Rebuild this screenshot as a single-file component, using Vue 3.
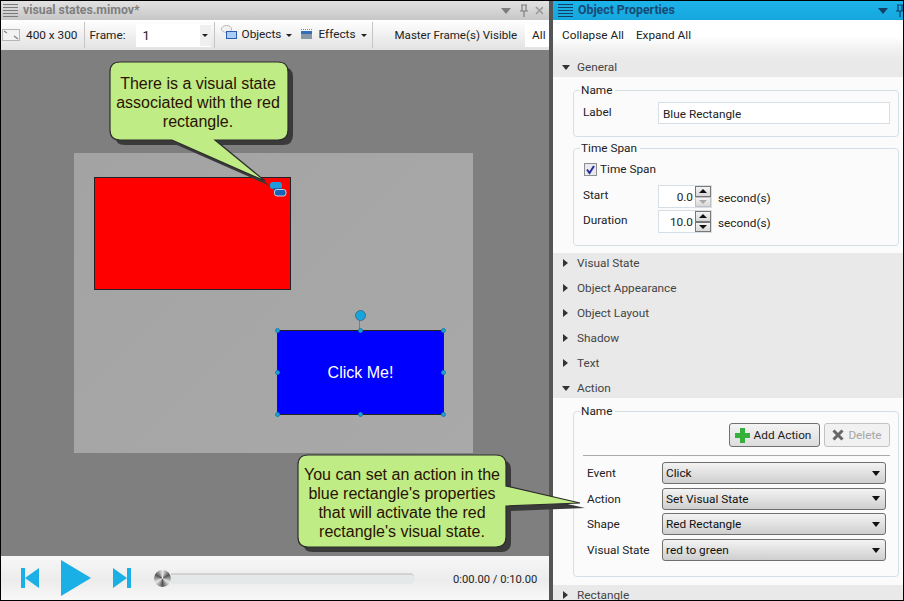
<template>
  <div class="app">
    <section class="doc">
      <header class="title">
        <div class="grip"><i v-for="n in 5" :key="n"></i></div>
        <span class="title-text">visual states.mimov*</span>
        <div class="win-icons">
          <svg width="42" height="14" viewBox="0 0 42 14">
            <path d="M0 4h10l-5 6z" fill="#7d7d7d" />
            <path d="M20 1h6M21 1v6h4V1M19 7h8M23 7v6" fill="none" stroke="#7d7d7d" stroke-width="1.2" />
            <path d="M35 3l7 7M42 3l-7 7" fill="none" stroke="#9a9a9a" stroke-width="1.6" />
          </svg>
        </div>
      </header>
      <div class="toolbar">
        <svg class="size-icon" width="18" height="12" viewBox="0 0 18 12">
          <rect x="0.5" y="0.5" width="17" height="11" fill="#f2f2f2" stroke="#b5b5b5" />
          <path d="M2 2l3 2M16 10l-4-3" stroke="#888" stroke-width="1.5" />
        </svg>
        <span class="size-text">400 x 300</span>
        <i class="sep sep-a"></i>
        <span>Frame:</span>
        <div class="frame-box"><span>1</span><b class="frame-drop"></b></div>
        <i class="sep sep-b"></i>
        <svg class="obj-icon" width="17" height="18" viewBox="0 0 17 18">
          <ellipse cx="5.5" cy="5" rx="5" ry="3.5" fill="#f2f2f2" stroke="#b8b8b8" />
          <rect x="5.5" y="7.5" width="10" height="7" fill="#a9cdf5" stroke="#2a5db0" />
        </svg>
        <span class="menu-text">Objects</span>
        <b class="drop"></b>
        <svg class="fx-icon" width="13" height="12" viewBox="0 0 13 12">
          <path d="M1 1.5h11" stroke="#3d9ae0" stroke-dasharray="1 1" />
          <rect x="1" y="3" width="11" height="8" fill="#8a97a5" />
          <rect x="1" y="3" width="11" height="3" fill="#2e6fb5" />
        </svg>
        <span class="menu-text fx-text">Effects</span>
        <b class="drop"></b>
        <i class="sep sep-c"></i>
        <span class="master">Master Frame(s) Visible</span>
        <div class="all-box">All</div>
      </div>
      <div class="canvas">
        <div class="stage">
          <div class="shape red"></div>
          <svg class="state-icon" width="18" height="16" viewBox="0 0 18 16">
            <rect x="1" y="1" width="12" height="7" rx="3" fill="#1f9bdc" />
            <rect x="4" y="7" width="8" height="4" fill="#1763b5" />
            <rect x="5.500" y="8.500" width="11.500" height="6.500" rx="2.500" fill="#1763b5" stroke="#c4d3e6" />
          </svg>
          <div class="shape blue">Click Me!</div>
          <div class="stem"></div>
          <div class="knob"></div>
          <i v-for="h in handles" :key="h.id" class="handle" :style="{ left: h.x + 'px', top: h.y + 'px' }"></i>
        </div>
      </div>
      <div class="player">
        <svg class="player-btn skip-back" width="18" height="20" viewBox="0 0 18 20">
          <path d="M0 0h4v20H0zM18 0v20L4 10z" fill="#1ab0e6" />
        </svg>
        <svg class="player-btn play" width="30" height="36" viewBox="0 0 30 36">
          <path d="M0 0l30 18L0 36z" fill="#1ab0e6" />
        </svg>
        <svg class="player-btn skip-fwd" width="18" height="20" viewBox="0 0 18 20">
          <path d="M14 0h4v20h-4zM0 0v20l14-10z" fill="#1ab0e6" />
        </svg>
        <div class="scrub"><div class="scrub-knob"></div><div class="scrub-track"></div></div>
        <span class="time">0:00.00 / 0:10.00</span>
      </div>
    </section>

    <section class="props">
      <header class="title title-blue">
        <div class="grip grip-dark"><i v-for="n in 5" :key="n"></i></div>
        <span class="title-text title-text-blue">Object Properties</span>
        <svg class="blue-icons" width="26" height="14" viewBox="0 0 26 14">
          <path d="M0 4h10l-5 6z" fill="#123f66" />
          <path d="M19 1h6M20 1v6h4V1M18 7h8M22 7v6" fill="none" stroke="#123f66" stroke-width="1.2" />
        </svg>
      </header>
      <div class="props-tools">
        <span>Collapse All</span>
        <span>Expand All</span>
      </div>
      <div class="sec-head sec-general"><b class="tri-down"></b>General</div>
      <div class="sec-body body-general">
        <fieldset class="group group-name">
          <legend>Name</legend>
          <div class="label-row">
            <span class="label-cell">Label</span>
            <div class="text-input">Blue Rectangle</div>
          </div>
        </fieldset>
        <fieldset class="group group-time">
          <legend>Time Span</legend>
          <div class="check-row">
            <svg width="13" height="13" viewBox="0 0 13 13">
              <rect x="0.5" y="0.5" width="12" height="12" fill="#e9e9f0" stroke="#8e8f8f" />
              <path d="M3 6.500l2.500 3.500L10 3" fill="none" stroke="#2b2f9c" stroke-width="2" />
            </svg>
            <span>Time Span</span>
          </div>
          <div v-for="s in spans" :key="s.label" class="span-row">
            <span class="label-cell span-label">{{ s.label }}</span>
            <div class="spin">
              <span class="spin-value">{{ s.value }}</span>
              <div class="spin-btns">
                <i class="spin-btn"><b class="up"></b></i>
                <i class="spin-btn" :class="{ off: s.off }"><b class="down"></b></i>
              </div>
            </div>
            <span class="unit">second(s)</span>
          </div>
        </fieldset>
      </div>
      <div class="sec-stack">
        <div v-for="s in collapsed" :key="s" class="sec-head"><b class="tri-right"></b>{{ s }}</div>
        <div class="sec-head sec-action"><b class="tri-down"></b>Action</div>
      </div>
      <div class="sec-body body-action">
        <fieldset class="group group-action">
          <legend>Name</legend>
          <div class="action-btns">
            <div class="btn add">
              <svg width="15" height="15" viewBox="0 0 15 15">
                <path d="M5 0h5v5h5v5h-5v5H5v-5H0V5h5z" fill="#35b03a" />
              </svg>
              Add Action
            </div>
            <div class="btn del">
              <svg width="12" height="12" viewBox="0 0 12 12">
                <path d="M1.500 1.500l9 9M10.500 1.500l-9 9" stroke="#666" stroke-width="3" />
              </svg>
              Delete
            </div>
          </div>
          <div class="rule"></div>
          <div v-for="r in actions" :key="r.label" class="action-row">
            <span class="action-label">{{ r.label }}</span>
            <div class="combo">{{ r.value }}<b class="combo-drop"></b></div>
          </div>
        </fieldset>
      </div>
      <div class="sec-head sec-last"><b class="tri-right"></b>Rectangle</div>
    </section>

    <svg class="callouts" width="904" height="601" viewBox="0 0 904 601">
      <g v-for="c in callouts" :key="c.id">
        <path :d="c.d" transform="translate(5 5)" fill="#3a3a3a" />
        <path :d="c.d" fill="#c0ec85" stroke="#2d2d2d" stroke-width="1.2" />
      </g>
    </svg>
    <div class="note note-top">There is a visual state associated with the red rectangle.</div>
    <div class="note note-bottom">You can set an action in the blue rectangle's properties that will activate the red rectangle's visual state.</div>
  </div>
</template>

<script setup>
const xs = [0, 83, 166];
const ys = [0, 42, 84];
const handles = [];
ys.forEach((y, j) => {
  xs.forEach((x, i) => {
    if (i === 1 && j === 1) return;
    handles.push({ id: `${i}-${j}`, x: 203 + x, y: 177 + y });
  });
});

const spans = [
  { label: "Start", value: "0.0", off: true },
  { label: "Duration", value: "10.0", off: false },
];

const collapsed = ["Visual State", "Object Appearance", "Object Layout", "Shadow", "Text"];

const actions = [
  { label: "Event", value: "Click" },
  { label: "Action", value: "Set Visual State" },
  { label: "Shape", value: "Red Rectangle" },
  { label: "Visual State", value: "red to green" },
];

const callouts = [
  {
    id: "top",
    d: "M120 62H278Q288 62 288 72V130Q288 140 278 140H215L265 181L172 140H120Q110 140 110 130V72Q110 62 120 62Z",
  },
  {
    id: "bottom",
    d: "M308 455H496Q506 455 506 465V486L580 503L506 506V537Q506 547 496 547H308Q298 547 298 537V465Q298 455 308 455Z",
  },
];
</script>

<style scoped>
.app {
  position: relative;
  display: flex;
  box-sizing: border-box;
  width: 904px;
  height: 601px;
  overflow: hidden;
  border: 1px solid #000;
  background: #555;
  color: #222;
  font-family: Roboto, "Open Sans", sans-serif;
  font-size: 11.8px;
}
.doc {
  display: flex;
  flex-direction: column;
  width: 548px;
  flex: none;
}
.props {
  display: flex;
  flex-direction: column;
  width: 350px;
  margin-left: 4px;
  flex: none;
  overflow: hidden;
  background: #fbfbfb;
}
.title {
  display: flex;
  align-items: center;
  height: 19px;
  flex: none;
  padding-left: 2px;
  background: linear-gradient(#e2e2e2, #c6c6c6);
}
.title-blue {
  padding-left: 5px;
  background: linear-gradient(#1db4ea, #15a6dc);
}
.grip {
  display: flex;
  flex-direction: column;
  gap: 2px;
  width: 15px;
}
.grip i {
  height: 1px;
  background: #7a7a7a;
}
.grip-dark i {
  background: #123f66;
}
.title-text {
  margin-left: 5px;
  margin-bottom: 1px;
  color: #7f7f7f;
  font-weight: 700;
  font-size: 12.3px;
}
.title-text-blue {
  color: #174a75;
}
.win-icons {
  display: flex;
  margin-left: auto;
  padding-right: 6px;
}
.blue-icons {
  margin-left: auto;
  margin-right: -1px;
}
.toolbar {
  display: flex;
  align-items: center;
  height: 30px;
  flex: none;
  padding-left: 1px;
  background: linear-gradient(#fff, #e2e2e2);
  white-space: nowrap;
}
.toolbar > * {
  flex: none;
}
.size-text {
  margin-left: 6px;
}
.sep {
  width: 1px;
  height: 26px;
  background: #c5c5c5;
}
.sep-a {
  margin: 0 5px 0 6px;
}
.sep-b {
  margin-left: 3px;
}
.sep-c {
  margin-left: 5px;
}
.frame-box {
  display: flex;
  align-items: center;
  justify-content: space-between;
  box-sizing: border-box;
  width: 75px;
  height: 23px;
  margin-left: 10px;
  padding-left: 7px;
  background: #fff;
  font-size: 13px;
}
.frame-drop {
  display: flex;
  align-items: center;
  justify-content: center;
  width: 11px;
  height: 21px;
  background: #efefef;
}
.frame-drop::after {
  content: "";
  width: 0;
  height: 0;
  border: 3px solid transparent;
  border-top: 3px solid #222;
  border-bottom: 0;
}
.drop {
  width: 0;
  height: 0;
  border: 3px solid transparent;
  border-top: 3px solid #222;
  border-bottom: 0;
  margin-left: 5px;
}
.obj-icon {
  margin-left: 6px;
  margin-top: -4px;
}
.menu-text {
  margin-left: 4px;
  margin-top: -2px;
}
.fx-icon {
  margin-left: 8px;
  margin-top: -2px;
}
.fx-text {
  margin-left: 5px;
}
.master {
  margin-left: 22px;
  font-size: 11.55px;
}
.all-box {
  display: flex;
  align-items: center;
  box-sizing: border-box;
  width: 24px;
  height: 23px;
  margin-left: 8px;
  padding-left: 7px;
  background: #fff;
}
.canvas {
  position: relative;
  flex: 1;
  background: #7f7f7f;
}
.stage {
  position: absolute;
  left: 73px;
  top: 103px;
  width: 399px;
  height: 300px;
  background: linear-gradient(135deg, #a3a3a3, #a9a9a9);
}
.shape {
  position: absolute;
  box-sizing: border-box;
  border: 1px solid #222;
}
.red {
  left: 20px;
  top: 24px;
  width: 197px;
  height: 113px;
  background: #f00;
}
.blue {
  display: flex;
  align-items: center;
  justify-content: center;
  left: 203px;
  top: 177px;
  width: 167px;
  height: 85px;
  background: #00f;
  color: #fff;
  font-family: "Liberation Sans", Arial, sans-serif;
  font-size: 16px;
}
.state-icon {
  position: absolute;
  left: 195px;
  top: 28px;
}
.stem {
  position: absolute;
  left: 285px;
  top: 165px;
  width: 1px;
  height: 12px;
  background: #6f8290;
}
.knob {
  position: absolute;
  left: 281px;
  top: 157px;
  box-sizing: border-box;
  width: 11px;
  height: 11px;
  border: 1px solid #3d6f8a;
  border-radius: 50%;
  background: #17a5dc;
}
.handle {
  position: absolute;
  box-sizing: border-box;
  width: 5px;
  height: 5px;
  margin: -2px 0 0 -2px;
  border: 1px solid #1f7fa8;
  border-radius: 50%;
  background: #17a5dc;
}
.player {
  display: flex;
  align-items: center;
  height: 44px;
  flex: none;
  padding-left: 20px;
  background: linear-gradient(#f7f7f7, #ececec 55%, #f8f8f8);
}
.player > * {
  flex: none;
}
.play {
  margin-left: 22px;
}
.skip-fwd {
  margin-left: 22px;
}
.scrub {
  display: flex;
  align-items: center;
  width: 260px;
  margin-left: 23px;
}
.scrub-knob {
  width: 17px;
  height: 17px;
  flex: none;
  border-radius: 50%;
  background: conic-gradient(#e8e8e8, #555, #e8e8e8, #555, #e8e8e8, #555, #e8e8e8);
}
.scrub-track {
  flex: 1;
  height: 9px;
  border-top: 2px solid #d2d2d2;
  border-radius: 0 4px 4px 0;
  background: #e4e8e9;
}
.time {
  margin-left: 39px;
  margin-top: 2px;
  font-size: 11.2px;
}
.props-tools {
  display: flex;
  gap: 12px;
  align-items: center;
  height: 30px;
  flex: none;
  padding-left: 9px;
  background: linear-gradient(#fff 55%, #f0f0f0);
}
.sec-head {
  display: flex;
  align-items: center;
  box-sizing: border-box;
  height: 25px;
  flex: none;
  padding-left: 9px;
  background: #e9e9e9;
  color: #444;
}
.sec-general {
  height: 27px;
  padding-top: 7px;
  background: linear-gradient(#f0f0f0, #e9e9e9 40%);
}
.sec-stack {
  flex: none;
}
.sec-stack .sec-head:first-child {
  height: 22px;
  padding-bottom: 2px;
}
.sec-action {
  height: 23px;
  padding-top: 3px;
}
.sec-last {
  height: 16px;
  padding-top: 3px;
}
.tri-down {
  width: 0;
  height: 0;
  margin-right: 7px;
  border: 4px solid transparent;
  border-top: 5px solid #333;
  border-bottom: 0;
}
.tri-right {
  width: 0;
  height: 0;
  margin-right: 9px;
  margin-left: 1px;
  border: 4px solid transparent;
  border-left: 5px solid #333;
  border-right: 0;
}
.body-general {
  padding: 6px 4px 0 20px;
  height: 176px;
  box-sizing: border-box;
  flex: none;
}
.body-action {
  padding: 6px 4px 0 20px;
  height: 187px;
  box-sizing: border-box;
  flex: none;
}
.group {
  box-sizing: border-box;
  margin: 0;
  min-width: 0;
  padding: 0;
  border: 1px solid #d5e0e6;
  border-radius: 4px;
}
.group legend {
  margin-left: 6px;
  padding: 0 3px 0 1px;
  line-height: 14px;
  color: #222;
}
.group-name {
  height: 54px;
}
.group-time {
  height: 105px;
  margin-top: 4px;
}
.group-action {
  height: 173px;
}
.label-row {
  display: flex;
  align-items: flex-start;
  padding: 0 8px 0 9px;
}
.label-cell {
  width: 75px;
  flex: none;
  padding-top: 8px;
}
.text-input {
  flex: 1;
  display: flex;
  align-items: center;
  box-sizing: border-box;
  height: 22px;
  margin-top: 5px;
  padding: 1px 0 0 4px;
  border: 1px solid #d5dfe5;
  background: #fff;
}
.check-row {
  display: flex;
  align-items: center;
  gap: 3px;
  padding: 7px 0 0 10px;
}
.span-row {
  display: flex;
  align-items: flex-start;
  height: 25px;
  padding-left: 9px;
}
.span-row:nth-child(3) {
  margin-top: 9px;
}
.span-label {
  padding-top: 3px;
}
.spin {
  display: flex;
  box-sizing: border-box;
  width: 54px;
  height: 23px;
  border: 1px solid #d5dfe5;
  background: #fff;
}
.spin-value {
  flex: 1;
  padding-top: 4px;
  padding-right: 2px;
  text-align: right;
}
.spin-btns {
  display: flex;
  flex-direction: column;
  width: 16px;
}
.spin-btn {
  display: flex;
  align-items: center;
  justify-content: center;
  flex: 1;
  box-sizing: border-box;
  border: 1px solid #777;
  background: linear-gradient(#f4f4f4, #d8d8d8);
}
.spin-btn.off {
  border-color: #c0c0c0;
}
.spin-btn.off .down {
  border-top-color: #aaa;
}
.up {
  width: 0;
  height: 0;
  border: 4px solid transparent;
  border-bottom: 4px solid #111;
  border-top: 0;
}
.down {
  width: 0;
  height: 0;
  border: 4px solid transparent;
  border-top: 4px solid #111;
  border-bottom: 0;
}
.unit {
  margin-left: 6px;
  padding-top: 6px;
}
.action-btns {
  display: flex;
  justify-content: flex-end;
  gap: 4px;
  margin-top: 5px;
  padding-right: 8px;
}
.btn {
  display: flex;
  align-items: center;
  justify-content: center;
  gap: 4px;
  box-sizing: border-box;
  height: 24px;
  border-radius: 3px;
}
.add {
  width: 91px;
  padding-right: 3px;
  border: 1px solid #707070;
  background: linear-gradient(#f4f4f4, #dcdcdc);
}
.del {
  width: 66px;
  border: 1px solid #c2c2c2;
  background: #f1f1f1;
  color: #a6a6a6;
}
.rule {
  height: 1px;
  margin: 8px 8px 6px 9px;
  background: #aaa;
}
.action-row {
  display: flex;
  align-items: center;
  height: 22px;
  margin-bottom: 3.7px;
  padding-left: 13px;
}
.action-label {
  width: 75px;
  flex: none;
}
.combo {
  display: flex;
  align-items: center;
  justify-content: space-between;
  box-sizing: border-box;
  width: 224px;
  height: 22px;
  padding: 0 5px 0 3px;
  border: 1px solid #6f6f6f;
  border-radius: 3px;
  background: linear-gradient(#f3f3f3, #cfcfcf);
  color: #111;
}
.combo-drop {
  width: 0;
  height: 0;
  border: 4px solid transparent;
  border-top: 5px solid #111;
  border-bottom: 0;
}
.callouts {
  position: absolute;
  left: -1px;
  top: -1px;
}
.note {
  position: absolute;
  box-sizing: border-box;
  color: #2a1200;
  font-family: "Liberation Sans", Arial, sans-serif;
  font-size: 16px;
  line-height: 19px;
  text-align: center;
}
.note-top {
  left: 112px;
  top: 73px;
  width: 170px;
}
.note-bottom {
  left: 299px;
  top: 464px;
  width: 204px;
}
</style>

<style>
body {
  margin: 0;
}
</style>
